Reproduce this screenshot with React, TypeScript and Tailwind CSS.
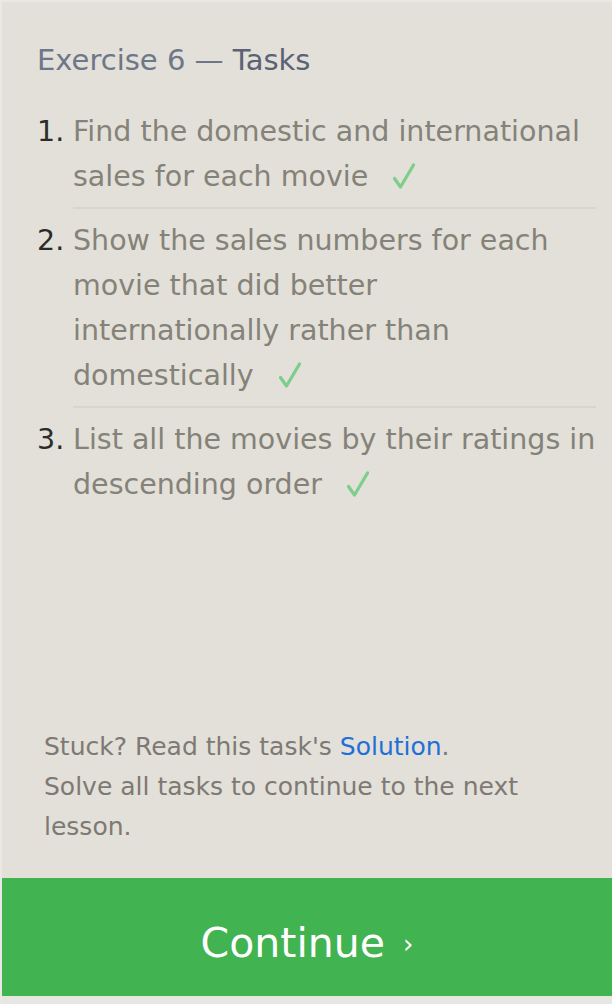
import type { ReactNode } from 'react';

function Check() {
  return (
    <svg
      width="22"
      height="26"
      viewBox="0 0 22 26"
      className="inline-block ml-[25px] align-[-3px]"
    >
      <path d="M1.5 15.5 L7.5 24 L20.5 2" fill="none" stroke="#7dcd8b" strokeWidth="3.2" strokeLinecap="round" strokeLinejoin="round" />
    </svg>
  );
}

export default function App() {
  const tasks: ReactNode[] = [
    'Find the domestic and international sales for each movie',
    <>
      Show the sales numbers for each movie that did better{' '}
      <span className="whitespace-nowrap">internationally rather than</span> domestically
    </>,
    'List all the movies by their ratings in descending order',
  ];

  return (
    <div
      className="h-[1004px] w-[612px] flex flex-col bg-[#e2e0d8] border-l-2 border-t-2 border-[#e9e8e3]"
      style={{ fontFamily: '"DejaVu Sans", sans-serif' }}
    >
      <div className="pl-[35px] pr-[16px]">
        <h1 className="mt-[41px] text-[29px] leading-[34px] text-[#6e7689]">
          Exercise 6 — <span className="text-[#5b6276]">Tasks</span>
        </h1>

        <ol className="mt-[23px]">
          {tasks.map((task, i) => (
            <li key={i} className="flex">
              <span className="w-[36px] shrink-0 text-[28.5px] leading-[45px] text-[#2b2b2b] pt-[9px]">
                {i + 1}.
              </span>
              <div
                className={
                  'flex-1 text-[28.5px] leading-[45px] text-[#858279] pt-[9px] pb-[8px] ' +
                  (i < tasks.length - 1 ? 'border-b-2 border-[#d8d6cb]' : '')
                }
              >
                {task}
                <Check />
              </div>
            </li>
          ))}
        </ol>
      </div>

      <div className="flex-1" />

      <div className="pl-[42px] pr-[16px] pb-[31px] text-[25px] leading-[40px] text-[#7e7974]">
        <p>
          Stuck? Read this task's <a className="text-[#1f6fd8]">Solution</a>.
        </p>
        <p>Solve all tasks to continue to the next lesson.</p>
      </div>

      <button className="h-[126px] w-full bg-[#41b350] text-white text-[41px] flex items-center justify-center gap-[18px] pt-[14px] border-b-[8px] border-[#e6e6e3]">
        Continue <span className="text-[26px]">›</span>
      </button>
    </div>
  );
}
